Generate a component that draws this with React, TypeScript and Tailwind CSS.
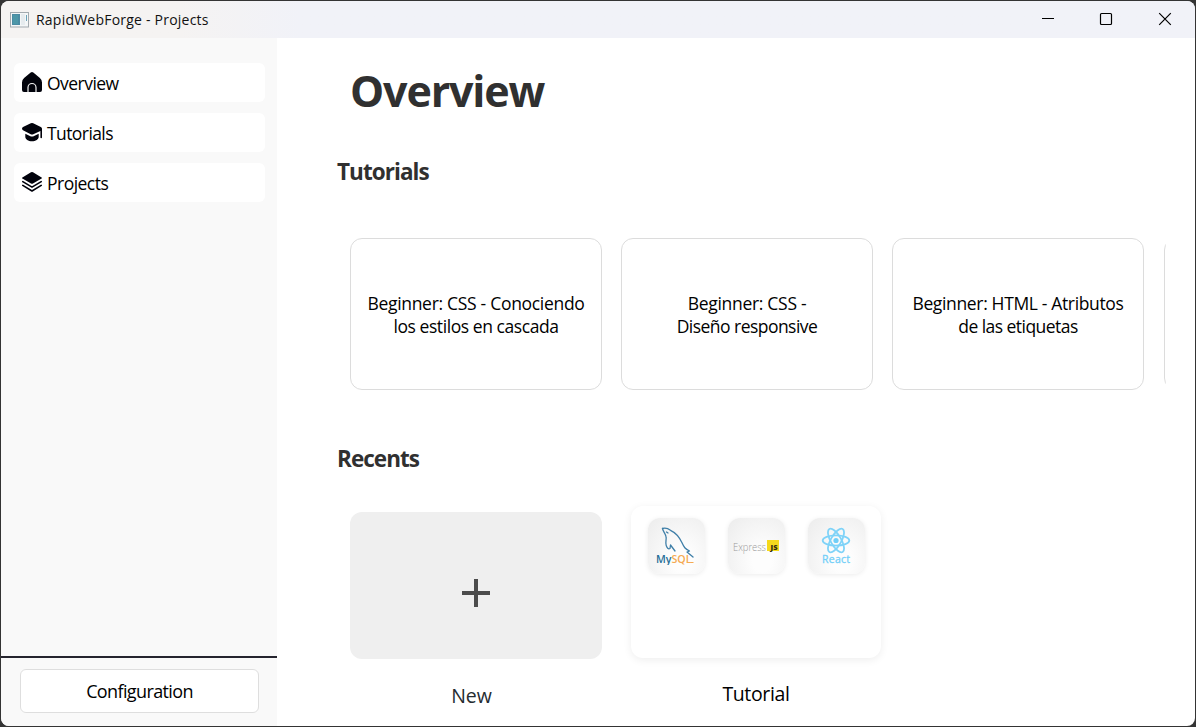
import React from "react";

const font = "font-['Open_Sans','Noto_Sans',sans-serif]";

function HomeIcon() {
  return (
    <svg className="-mt-[2px] size-5 shrink-0" viewBox="0 0 20 20">
      <path
        fill="#02030c"
        d="M8.700.6a2 2 0 0 1 2.600 0l6.600 5.500A6 6 0 0 1 20 10.600V18a2 2 0 0 1-2 2H2a2 2 0 0 1-2-2v-7.400a6 6 0 0 1 2.100-4.500z"
      />
      <path fill="none" stroke="#f4f4f4" strokeWidth="1.200" d="M6 20v-4.500a4 4 0 0 1 8 0V20" />
    </svg>
  );
}

function CapIcon() {
  return (
    <svg className="-mt-[2px] size-5 shrink-0" viewBox="0 0 20 20">
      <path
        fill="#02030c"
        d="M8.800 1.200a3 3 0 0 1 2.400 0l7.600 3.700c.8.400 1.200 1 1.200 1.900V15.500a.8.800 0 0 1-1.600 0V8.900l-7.100 3.300a3 3 0 0 1-2.600 0L1 8.300C-.3 7.600-.3 5.500 1 4.900z"
      />
      <path fill="#02030c" d="M3.300 11.800l4.600 2.200c1.400.7 2.800.7 4.200 0l4.600-2.200v3c0 2.700-3 4.500-6.700 4.500s-6.700-1.800-6.700-4.500z" />
    </svg>
  );
}

function LayersIcon() {
  return (
    <svg className="-mt-[2px] size-5 shrink-0" viewBox="0 0 20 20">
      <path fill="#02030c" d="M9 .3a2 2 0 0 1 2 0l8.600 5.100c.5.300.5.900 0 1.200L11 11.500a2 2 0 0 1-2 0L.4 6.600a.7.700 0 0 1 0-1.200z" />
      <path
        fill="none"
        stroke="#02030c"
        strokeWidth="1.600"
        strokeLinejoin="round"
        strokeLinecap="round"
        d="M.8 9.600 10 15.100l9.200-5.500M.8 13.400 10 19l9.200-5.600"
      />
    </svg>
  );
}

function AppIcon() {
  return (
    <svg className="h-4 w-[19px] shrink-0" viewBox="0 0 19 16">
      <rect x=".5" y=".5" width="18" height="14.500" fill="#f4f6f7" stroke="#a3aaaf" />
      <rect x="2" y="2" width="8" height="11" fill="#4b8ba3" />
      <rect x="3" y="3" width="5" height="9" fill="#4d97a8" />
      <rect x="11" y="2" width="4" height="11" fill="#e6ebee" />
      <rect x="16" y="3" width="1" height="6" fill="#6ba3b8" />
    </svg>
  );
}

const navItems = [
  { label: "Overview", icon: <HomeIcon />, tracking: "tracking-[-0.53px]" },
  { label: "Tutorials", icon: <CapIcon />, tracking: "tracking-[-0.58px]" },
  { label: "Projects", icon: <LayersIcon />, tracking: "tracking-[-0.52px]" },
];

const tutorials = [
  { lines: ["Beginner: CSS - Conociendo", "los estilos en cascada"], tracking: ["tracking-[-0.3px]", "tracking-[-0.43px]"] },
  { lines: ["Beginner: CSS -", "Diseño responsive"], tracking: ["tracking-[-0.3px]", "tracking-[-0.53px]"] },
  { lines: ["Beginner: HTML - Atributos", "de las etiquetas"], tracking: ["tracking-[-0.35px]", "tracking-[-0.55px]"] },
];

function TitleBar() {
  return (
    <header className="flex h-[37px] shrink-0 items-center bg-linear-to-r from-[#f5f3f2] from-15% to-[#f1f2f8] to-25% pl-[9px]">
      <AppIcon />
      <span className="ml-[7px] flex-1 text-[14px] tracking-[0.22px] text-[#111]">RapidWebForge - Projects</span>
      <svg className="h-[37px] w-[174px]" viewBox="0 0 174 37" fill="none" stroke="#000" strokeWidth="1.200">
        <path d="M21 17.500h12" strokeWidth="1" />
        <rect x="79.500" y="12.500" width="11" height="11" rx="1" />
        <path d="M138.200 12.200l11.600 11.600M149.800 12.200l-11.600 11.600" />
      </svg>
    </header>
  );
}

function Sidebar() {
  return (
    <aside className="flex w-[276px] shrink-0 flex-col bg-[#f9f9f9]">
      <nav className="flex flex-1 flex-col gap-[11px] pt-[25px] pr-3 pl-[13px]">
        {navItems.map((item) => (
          <a key={item.label} className="flex h-[39px] items-center gap-[5px] rounded-[6px] bg-white pl-2">
            {item.icon}
            <span className={"text-[17.500px] leading-6 text-black " + item.tracking}>{item.label}</span>
          </a>
        ))}
      </nav>
      <div className="h-[70px] border-t-2 border-[#25242e] pt-[11px] pr-[18px] pl-[19px]">
        <button className="flex h-11 w-full items-center justify-center rounded-[6px] border border-[#dedede] bg-white text-[18px] tracking-[-0.62px] text-black">
          Configuration
        </button>
      </div>
    </aside>
  );
}

function MySqlLogo() {
  return (
    <svg className="h-[38px] w-10" viewBox="0 0 40 38">
      <g fill="none" stroke="#3f7fa8" strokeWidth="1.300" strokeLinecap="round" strokeLinejoin="round">
        <path d="M6.500 1.500c3-.8 6 .3 8 1.800 6 2.700 9 7 11.500 12.500 2 4.400 3 6 7.500 8.200l-2.500 1 6 5" />
        <path d="M6.500 1.500c.3 2.500 2.700 4.500 3.500 8 .8 3-1 6 .2 9 .8 2.300 2 4 3.800 3l.5-3.500 4.500 6" />
        <path d="M10.500 5l1.500 1" />
      </g>
      <text x="0" y="36" fontSize="10.500" fontWeight="600" fill="#276f98" textLength="15.500" lengthAdjust="spacingAndGlyphs" fontFamily="Open Sans, sans-serif">My</text>
      <text x="15.500" y="36" fontSize="10.500" fontWeight="600" fill="#f5aa52" textLength="20" lengthAdjust="spacingAndGlyphs" fontFamily="Open Sans, sans-serif">SQL</text>
      <path d="M35 35.500h2.500" stroke="#f5aa52" />
    </svg>
  );
}

function ExpressLogo() {
  return (
    <svg className="h-[38px] w-[46px]" viewBox="0 0 46 38">
      <text x="0" y="23.500" fontSize="10" fontWeight="300" fill="#999" textLength="33" lengthAdjust="spacingAndGlyphs" fontFamily="Open Sans, sans-serif">Express</text>
      <rect x="34" y="13" width="12" height="11" fill="#f5d91c" />
      <text x="37.500" y="22.800" fontSize="7.500" fontWeight="800" fill="#2f2a10" textLength="7" lengthAdjust="spacingAndGlyphs" fontFamily="Open Sans, sans-serif">JS</text>
    </svg>
  );
}

function ReactLogo() {
  return (
    <svg className="h-[38px] w-[30px]" viewBox="0 0 30 38">
      <g fill="none" stroke="#7fd3f8" strokeWidth="1.800">
        <ellipse cx="15" cy="13.500" rx="13.300" ry="5.200" />
        <ellipse cx="15" cy="13.500" rx="13.300" ry="5.200" transform="rotate(60 15 13.500)" />
        <ellipse cx="15" cy="13.500" rx="13.300" ry="5.200" transform="rotate(120 15 13.500)" />
      </g>
      <circle cx="15" cy="13.500" r="2.600" fill="#72cff8" />
      <text x="1" y="35.500" fontSize="10.500" fill="#72cff8" stroke="#72cff8" strokeWidth=".3" textLength="28" fontFamily="Open Sans, sans-serif">React</text>
    </svg>
  );
}

function TechBadge({ children }: { children: React.ReactNode }) {
  return (
    <div className="flex h-[56px] w-[57px] items-center justify-center rounded-[12px] bg-radial-[at_60%_75%] from-[#fdfdfd] from-20% to-[#ececec] pr-[2px] shadow-[0_1px_5px_rgba(0,0,0,0.08)]">
      {children}
    </div>
  );
}

export default function App() {
  return (
    <div className={"h-[727px] w-[1196px] overflow-hidden bg-[#343434] p-px " + font}>
      <div className="flex h-full flex-col overflow-hidden rounded-[8px] bg-white">
        <TitleBar />
        <div className="flex min-h-0 flex-1">
          <Sidebar />
          <main className="flex min-w-0 flex-1 flex-col pl-[60px]">
            <h1 className="mt-[23px] ml-[13px] h-[60px] text-[43px] leading-[60px] font-bold tracking-[-1.150px] text-[#303030]">Overview</h1>
            <h2 className="mt-[36px] h-[30px] text-[22.500px] leading-[30px] font-bold tracking-[-0.95px] text-[#303030]">Tutorials</h2>
            <section className="mt-[51px] ml-[13px] flex w-[816px] gap-[19px] overflow-hidden">
              {tutorials.map((item) => (
                <article
                  key={item.lines[1]}
                  className="flex h-[152px] w-[252px] shrink-0 flex-col items-center justify-center rounded-[12px] border border-[#dcdcdc] pt-[2px] text-[17.500px] leading-[23px] text-black"
                >
                  {item.lines.map((line, i) => (
                    <p key={line} className={"whitespace-nowrap " + item.tracking[i]}>{line}</p>
                  ))}
                </article>
              ))}
              <article className="ml-px h-[152px] w-[252px] shrink-0 rounded-[12px] border border-[#dcdcdc]" />
            </section>
            <h2 className="mt-[54px] h-[30px] text-[22.500px] leading-[30px] font-bold tracking-[-0.95px] text-[#303030]">Recents</h2>
            <section className="mt-[32px] ml-[13px] flex gap-[29px]">
              <div className="w-[252px] pt-[6px]">
                <button className="flex h-[147px] w-full items-center justify-center rounded-[12px] bg-[#efefef] pt-[15px]">
                  <svg className="size-7" viewBox="0 0 28 28" fill="#4c4c4c">
                    <path d="M12 0h4v12h12v4H16v12h-4V16H0v-4h12z" />
                  </svg>
                </button>
                <p className="mt-[22px] pr-[9px] text-center text-[19.500px] leading-[30px] tracking-[-0.1px] text-[#252b30]">New</p>
              </div>
              <div className="w-[250px]">
                <div className="flex h-[152px] gap-[23px] rounded-[12px] bg-white pt-3 pl-[17px] shadow-[0_2px_8px_rgba(0,0,0,0.07)]">
                  <TechBadge><MySqlLogo /></TechBadge>
                  <TechBadge><ExpressLogo /></TechBadge>
                  <TechBadge><ReactLogo /></TechBadge>
                </div>
                <p className="mt-[21px] text-center text-[19.500px] leading-[30px] tracking-[-0.35px] text-black">Tutorial</p>
              </div>
            </section>
          </main>
        </div>
      </div>
    </div>
  );
}
